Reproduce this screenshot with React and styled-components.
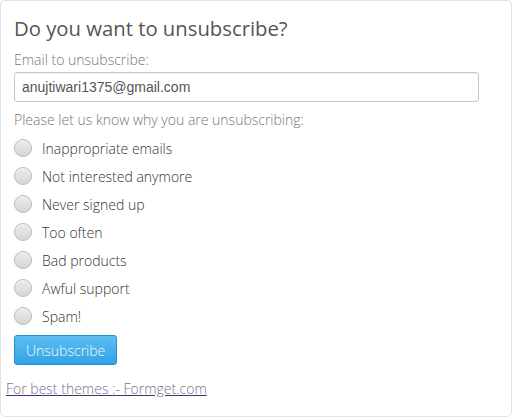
import React from "react";
import styled, { createGlobalStyle } from "styled-components";

const Global = createGlobalStyle`
  html, body { margin: 0; padding: 0; background: #fff; }
  * { box-sizing: border-box; }
`;

const Card = styled.div`
  width: 512px;
  height: 417px;
  border: 1px solid #e2e2e2;
  border-radius: 5px;
  background: #fff;
  font-family: "Open Sans", sans-serif;
  padding: 14px 0 0 0;
`;

const Form = styled.form`
  display: flex;
  flex-direction: column;
  align-items: flex-start;
  padding: 0 0 0 13px;
  margin: 0;
`;

const Title = styled.h2`
  margin: 0;
  font-weight: 400;
  font-size: 20.3px;
  line-height: 26px;
  color: #555;
`;

const Label = styled.div`
  margin-top: ${(p) => p.$mt}px;
  font-size: 14px;
  line-height: 20px;
  font-weight: 300;
  color: #777;
`;

const Input = styled.input`
  margin-top: 2px;
  width: 465px;
  height: 30px;
  border: 1px solid #c8c8c8;
  border-radius: 3px;
  padding: 0 7px;
  font-family: "Liberation Sans", Arial, sans-serif;
  font-size: 14px;
  color: #555;
  box-shadow: inset 0 1px 1px rgba(0,0,0,0.06);
  outline: none;
`;

const Options = styled.div`
  margin-top: 4px;
  display: flex;
  flex-direction: column;
`;

const Option = styled.label`
  display: flex;
  align-items: center;
  height: 28px;
  gap: 10px;
  font-size: 14px;
  font-weight: 300;
  color: #333;
  cursor: pointer;
`;

const Radio = styled.span`
  width: 18px;
  height: 18px;
  border-radius: 50%;
  border: 1px solid #b9b9b9;
  background: linear-gradient(#ececec, #d6d6d6);
  box-shadow: inset 0 1px 1px rgba(255,255,255,0.6);
  flex: none;
`;

const Button = styled.button`
  margin-top: 5px;
  height: 30px;
  padding: 0 11px;
  border: 1px solid #1f8fd6;
  border-radius: 3px;
  background: linear-gradient(#5ebef1, #31a3e6);
  color: #f4faff;
  font-family: "Open Sans", sans-serif;
  font-size: 14px;
  font-weight: 300;
  cursor: pointer;
`;

const Footer = styled.div`
  margin-top: 12px;
  padding-left: 5px;
`;

const Link = styled.a`
  font-size: 14px;
  font-weight: 300;
  color: #74748a;
  text-decoration: underline;
  text-decoration-color: #4d2a80;
`;

const reasons = [
  "Inappropriate emails",
  "Not interested anymore",
  "Never signed up",
  "Too often",
  "Bad products",
  "Awful support",
  "Spam!",
];

export default function App() {
  return (
    <>
      <Global />
      <Card>
        <Form onSubmit={(e) => e.preventDefault()}>
          <Title>Do you want to unsubscribe?</Title>
          <Label $mt={9}>Email to unsubscribe:</Label>
          <Input defaultValue="anujtiwari1375@gmail.com" />
          <Label $mt={8}>Please let us know why you are unsubscribing:</Label>
          <Options>
            {reasons.map((r) => (
              <Option key={r}>
                <Radio />
                {r}
              </Option>
            ))}
          </Options>
          <Button type="submit">Unsubscribe</Button>
        </Form>
        <Footer>
          <Link href="#">For best themes :- Formget.com</Link>
        </Footer>
      </Card>
    </>
  );
}
